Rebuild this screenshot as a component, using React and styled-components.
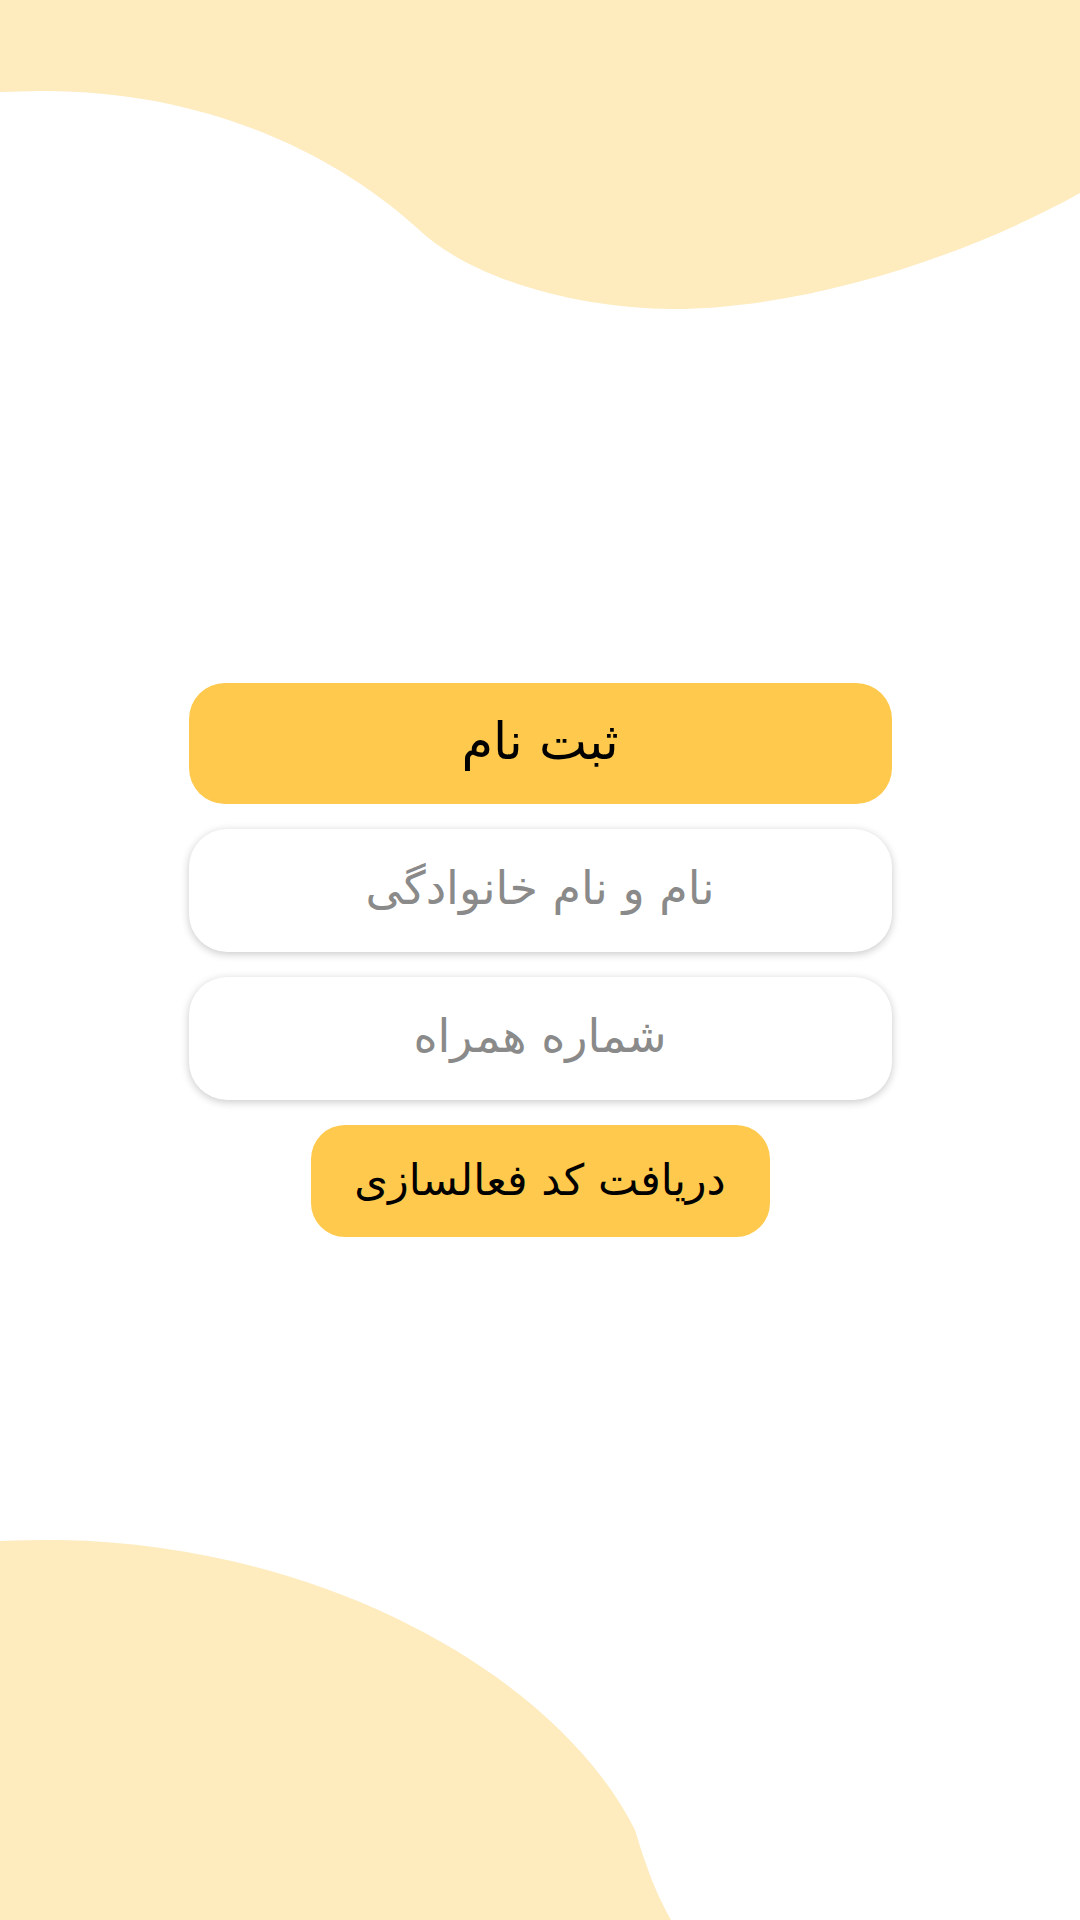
import React from "react";
import styled, { createGlobalStyle } from "styled-components";

const Global = createGlobalStyle`
  html, body { margin: 0; padding: 0; background: #fff; }
  body { font-family: "DejaVu Sans", "Noto Sans", sans-serif; }
  * { box-sizing: border-box; }
`;

const Screen = styled.div`
  position: relative;
  width: 1080px;
  height: 1920px;
  overflow: hidden;
  background: #ffffff;
  display: flex;
  flex-direction: column;
  align-items: center;
  padding-top: 683px;
`;

const Blob = styled.svg`
  position: absolute;
  left: 0;
  top: 0;
  width: 1080px;
  height: 1920px;
  pointer-events: none;
`;

const Form = styled.form`
  position: relative;
  width: 703px;
  display: flex;
  flex-direction: column;
  align-items: center;
  gap: 25px;
  direction: rtl;
`;

const Title = styled.div`
  width: 100%;
  height: 121px;
  border-radius: 36px;
  background: #fec94c;
  color: #000;
  display: flex;
  align-items: center;
  justify-content: center;
  font-size: 51px;
  padding-bottom: 4px;
`;

const Field = styled.input`
  width: 100%;
  height: 123px;
  border: none;
  outline: none;
  border-radius: 38px;
  background: #fff;
  box-shadow: 0 2px 9px rgba(0, 0, 0, 0.22);
  text-align: center;
  font-family: "DejaVu Sans", "Noto Sans", sans-serif;
  font-size: 46px;
  color: #333;
  direction: rtl;
  padding-bottom: 6px;
  &::placeholder { color: #8a8a8a; }
`;

const Submit = styled.button`
  width: 459px;
  height: 112px;
  border: none;
  border-radius: 34px;
  background: #fec94c;
  color: #000;
  font-family: "DejaVu Sans", "Noto Sans", sans-serif;
  font-size: 43px;
  padding-bottom: 4px;
  cursor: pointer;
`;

export default function App() {
  return (
    <>
      <Global />
      <Screen>
        <Blob viewBox="0 0 1080 1920" xmlns="http://www.w3.org/2000/svg">
          <path
            fill="#feebbe"
            d="M0,0 H1080 V193 C960,260 800,309 673,309 C580,309 470,280 416,227 C330,150 200,90 40,91 L0,92 Z"
          />
          <path
            fill="#feebbe"
            d="M0,1920 V1541 C20,1540 40,1540 60,1540 C330,1545 560,1680 635,1830 C650,1880 660,1900 671,1920 Z"
          />
        </Blob>
        <Form onSubmit={(e) => e.preventDefault()}>
          <Title>ثبت نام</Title>
          <Field type="text" placeholder="نام و نام خانوادگی" />
          <Field type="tel" placeholder="شماره همراه" />
          <Submit type="submit">دریافت کد فعالسازی</Submit>
        </Form>
      </Screen>
    </>
  );
}
